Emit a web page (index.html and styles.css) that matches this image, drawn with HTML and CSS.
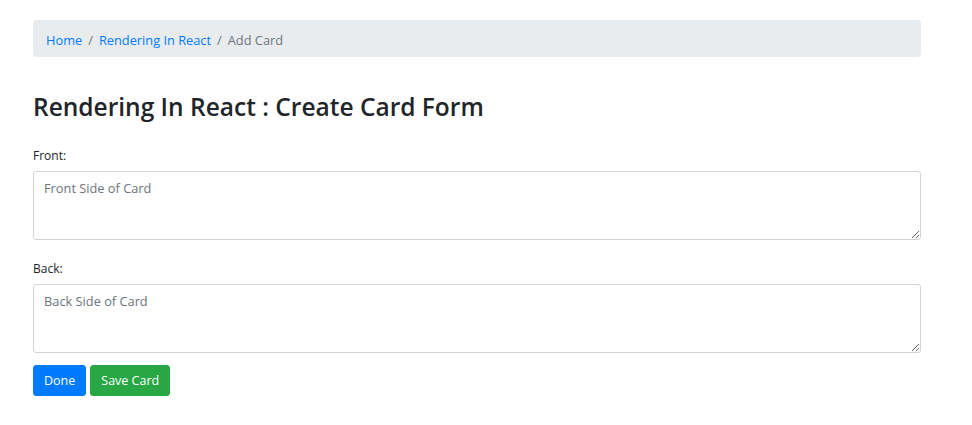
FILE: index.html
```html
<!DOCTYPE html>
<html>
<head>
<meta charset="utf-8">
<link rel="stylesheet" href="styles.css">
</head>
<body>
<div class="container">
  <nav class="breadcrumb">
    <a href="#" class="crumb-link">Home</a>
    <span class="sep">/</span>
    <a href="#" class="crumb-link">Rendering In React</a>
    <span class="sep">/</span>
    <span class="crumb-active">Add Card</span>
  </nav>
  <h2 class="title">Rendering In React : Create Card Form</h2>
  <form class="form">
    <div class="group">
      <label class="label" for="front">Front:</label>
      <textarea id="front" class="field" placeholder="Front Side of Card"></textarea>
    </div>
    <div class="group group-last">
      <label class="label" for="back">Back:</label>
      <textarea id="back" class="field" placeholder="Back Side of Card"></textarea>
    </div>
    <div class="actions">
      <button type="button" class="btn btn-primary">Done</button>
      <button type="button" class="btn btn-success">Save Card</button>
    </div>
  </form>
</div>
</body>
</html>
```

FILE: styles.css
```css
* { box-sizing: border-box; }
body {
  margin: 0;
  font-family: "Open Sans", "Noto Sans", sans-serif;
  font-size: 13px;
  color: #212529;
  background: #fff;
}
.container {
  width: 888px;
  margin-left: 33px;
  padding-top: 20px;
}
.breadcrumb {
  display: flex;
  align-items: center;
  height: 37px;
  padding: 2px 13px 0;
  background: #e9ecef;
  border-radius: 4px;
  font-size: 12.8px;
}
.crumb-link { color: #007bff; text-decoration: none; }
.sep { color: #6c757d; padding: 0 6px; }
.crumb-active { color: #6c757d; }
.title {
  margin: 34px 0 0;
  font-size: 24.5px;
  font-weight: 600;
  line-height: 32px;
}
.form { margin-top: 24px; }
.group { margin-bottom: 20px; }
.group-last { margin-bottom: 12px; }
.label {
  display: block;
  font-size: 12px;
  line-height: 18px;
  margin-bottom: 6px;
}
.field {
  display: block;
  width: 100%;
  height: 69px;
  padding: 6px 10px;
  font-family: inherit;
  font-size: 12.8px;
  line-height: 20px;
  color: #495057;
  border: 1px solid #ced4da;
  border-radius: 3px;
  resize: vertical;
}
.field::placeholder { color: #6c757d; }
.actions { display: flex; gap: 4px; }
.btn {
  height: 31px;
  padding: 0 10px;
  font-family: inherit;
  font-size: 12.5px;
  color: #fff;
  border: 1px solid transparent;
  border-radius: 3px;
}
.btn-primary { background: #007bff; border-color: #007bff; }
.btn-success { background: #28a745; border-color: #28a745; }
```
